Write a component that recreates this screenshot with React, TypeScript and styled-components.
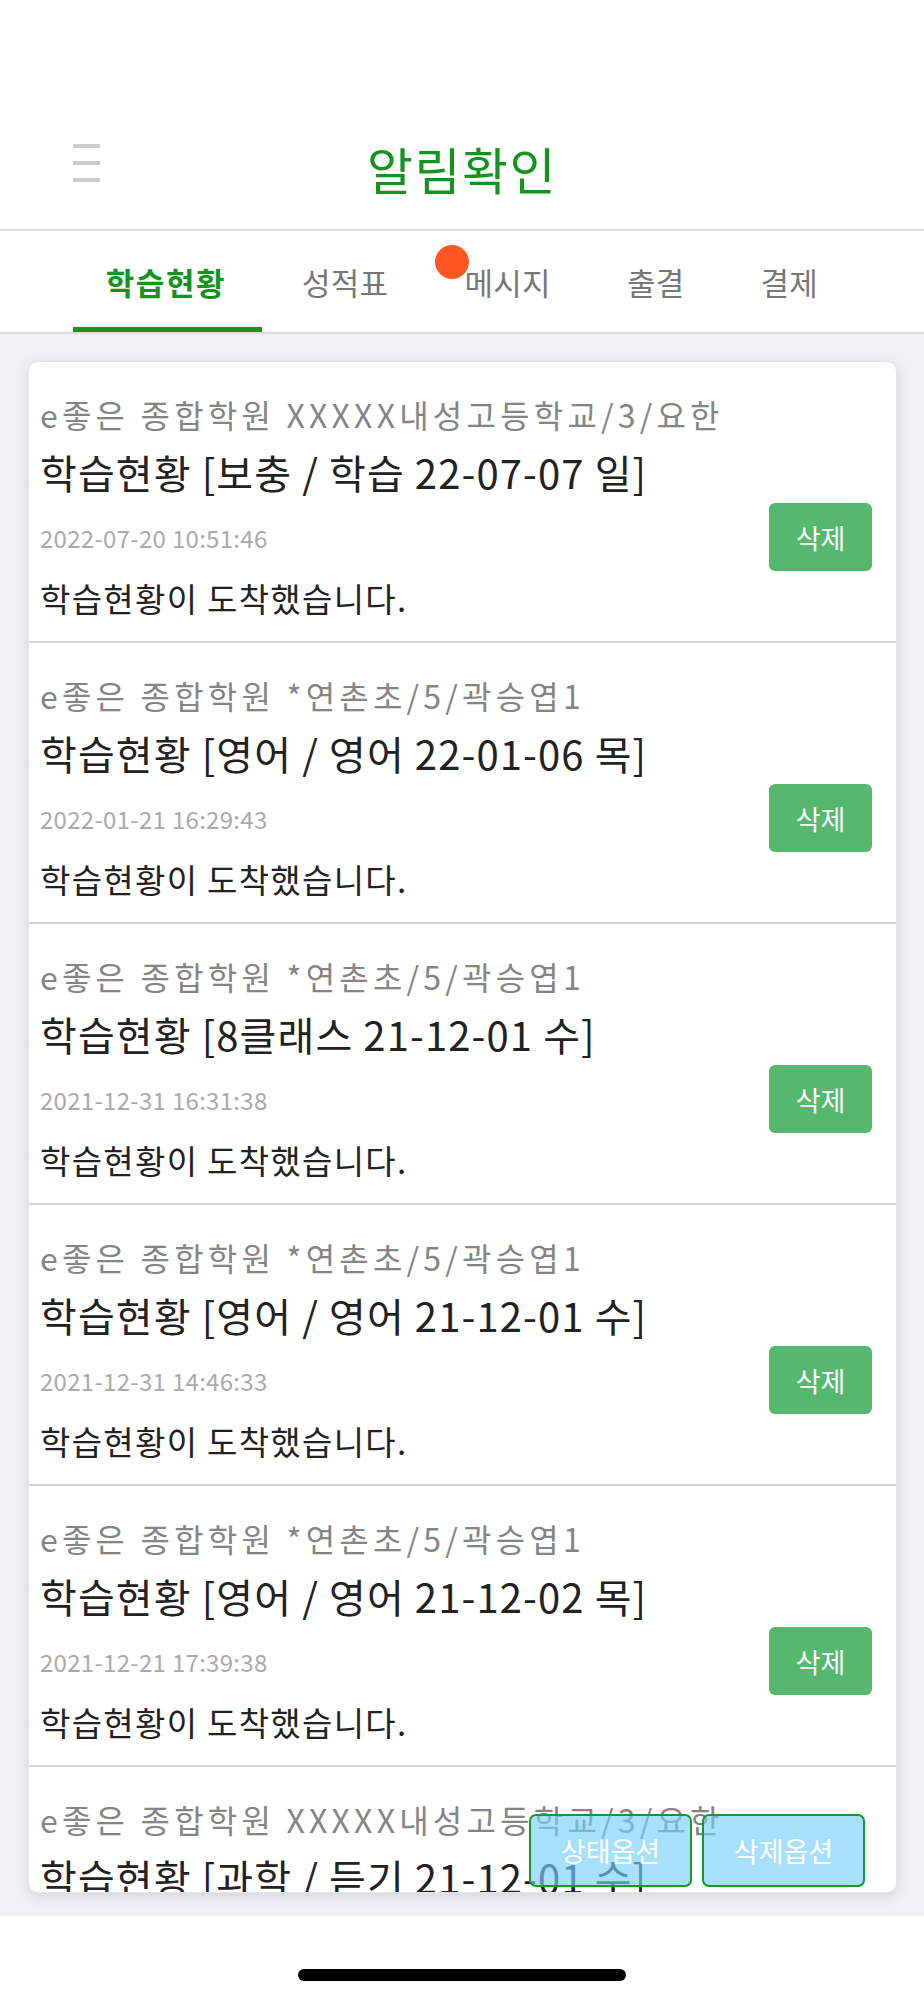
import React from 'react';
import styled, { createGlobalStyle } from 'styled-components';

// 알림확인 화면 — 헤더, 탭, 알림 카드 목록

const GlobalStyle = createGlobalStyle`
  body {
    margin: 0;
    background: #ffffff;
    font-family: "Noto Sans CJK KR", "Noto Sans", sans-serif;
  }
  * {
    box-sizing: border-box;
  }
`;

const Page = styled.div`
  width: 924px;
  height: 2000px;
  display: flex;
  flex-direction: column;
  background: #ffffff;
`;

const StatusSpace = styled.div`
  height: 100px;
  flex: none;
`;

const Header = styled.header`
  height: 131px;
  flex: none;
  display: grid;
  grid-template-columns: 1fr auto 1fr;
  align-items: center;
  border-bottom: 2px solid #dcdcdc;
`;

const MenuButton = styled.div`
  display: flex;
  flex-direction: column;
  gap: 13px;
  width: 27px;
  margin-left: 73px;
  margin-top: -4px;

  span {
    display: block;
    height: 4px;
    background: #cccccc;
  }
`;

const Title = styled.h1`
  margin: 6px 0 0;
  font-size: 50px;
  font-weight: 400;
  letter-spacing: 1.5px;
  color: #14941f;
  line-height: 1;
`;

const TabBar = styled.nav`
  height: 103px;
  flex: none;
  display: flex;
  justify-content: center;
  border-bottom: 2px solid #dcdcdc;
`;

const Tab = styled.div<{ $active?: boolean }>`
  position: relative;
  display: flex;
  align-items: center;
  padding: 0 38px;
  font-size: 31px;
  letter-spacing: ${(p) => (p.$active ? '1.5px' : '0.3px')};
  font-weight: ${(p) => (p.$active ? 600 : 400)};
  color: ${(p) => (p.$active ? '#14941f' : '#777777')};

  &::after {
    content: '';
    position: absolute;
    left: 5px;
    right: 2px;
    bottom: 0;
    height: 5px;
    background: ${(p) => (p.$active ? '#14941f' : 'transparent')};
  }
`;

const Badge = styled.span`
  position: absolute;
  left: 9px;
  top: 14px;
  width: 34px;
  height: 34px;
  border-radius: 50%;
  background: #ff5722;
`;

const Content = styled.main`
  position: relative;
  flex: none;
  height: 1582px;
  padding: 27px 27px 0 28px;
  background: #eff0f2;
`;

const Card = styled.section`
  height: 1532px;
  overflow: hidden;
  background: #ffffff;
  border-radius: 10px;
  border: 1px solid #e1e5ee;
  box-shadow: 0 3px 14px rgba(0, 0, 0, 0.12);
`;

const Item = styled.article`
  padding: 32px 24px 22px 11px;
  border-bottom: 2px solid #d6d6d6;
`;

const School = styled.div`
  font-size: 32px;
  line-height: 40px;
  letter-spacing: 4.2px;
  font-weight: 400;
  color: #858585;
  white-space: nowrap;
`;

const ItemTitle = styled.div`
  margin-top: 14px;
  font-size: 40px;
  line-height: 48px;
  letter-spacing: 1.1px;
  color: #222222;
  white-space: nowrap;
`;

const DateRow = styled.div`
  margin-top: 7px;
  height: 68px;
  display: flex;
  align-items: center;
  justify-content: space-between;
`;

const DateText = styled.span`
  font-size: 24px;
  letter-spacing: 0.3px;
  color: #aaaaaa;
`;

const DeleteButton = styled.button`
  width: 103px;
  height: 68px;
  border: none;
  border-radius: 6px;
  background: #55b86e;
  color: #ffffff;
  font-family: inherit;
  font-size: 27px;
  padding: 0;
`;

const Message = styled.div`
  margin-top: 6px;
  font-size: 33px;
  line-height: 42px;
  letter-spacing: 1.3px;
  color: #222222;
`;

const FloatingActions = styled.div`
  position: absolute;
  right: 59px;
  bottom: 29px;
  display: flex;
  gap: 10px;
`;

const OptionButton = styled.button`
  width: 163px;
  height: 73px;
  padding: 0;
  border: 2px solid #16992a;
  border-radius: 7px;
  background: rgba(118, 207, 249, 0.65);
  color: #ffffff;
  font-family: inherit;
  font-size: 27px;
`;

const HomeArea = styled.div`
  flex: none;
  height: 84px;
  display: flex;
  justify-content: center;
  padding-top: 53px;
  background: #ffffff;
`;

const HomeIndicator = styled.div`
  width: 328px;
  height: 12px;
  border-radius: 6px;
  background: #000000;
`;

const tabs = ['학습현황', '성적표', '메시지', '출결', '결제'];

const notices = [
  { school: 'e좋은 종합학원 XXXXX내성고등학교/3/요한', title: '학습현황 [보충 / 학습 22-07-07 일]', date: '2022-07-20 10:51:46' },
  { school: 'e좋은 종합학원 *연촌초/5/곽승엽1', title: '학습현황 [영어 / 영어 22-01-06 목]', date: '2022-01-21 16:29:43' },
  { school: 'e좋은 종합학원 *연촌초/5/곽승엽1', title: '학습현황 [8클래스 21-12-01 수]', date: '2021-12-31 16:31:38' },
  { school: 'e좋은 종합학원 *연촌초/5/곽승엽1', title: '학습현황 [영어 / 영어 21-12-01 수]', date: '2021-12-31 14:46:33' },
  { school: 'e좋은 종합학원 *연촌초/5/곽승엽1', title: '학습현황 [영어 / 영어 21-12-02 목]', date: '2021-12-21 17:39:38' },
  { school: 'e좋은 종합학원 XXXXX내성고등학교/3/요한', title: '학습현황 [과학 / 듣기 21-12-01 수]', date: '2021-12-20 15:12:07' },
];

export default function App() {
  return (
    <>
      <GlobalStyle />
      <Page>
        <StatusSpace />
        <Header>
          <MenuButton>
            <span />
            <span />
            <span />
          </MenuButton>
          <Title>알림확인</Title>
          <div />
        </Header>

        <TabBar>
          {tabs.map((t, i) => (
            <Tab key={t} $active={i === 0}>
              {i === 2 && <Badge />}
              {t}
            </Tab>
          ))}
        </TabBar>

        <Content>
          <Card>
            {notices.map((n, i) => (
              <Item key={i}>
                <School>{n.school}</School>
                <ItemTitle>{n.title}</ItemTitle>
                <DateRow>
                  <DateText>{n.date}</DateText>
                  <DeleteButton>삭제</DeleteButton>
                </DateRow>
                <Message>학습현황이 도착했습니다.</Message>
              </Item>
            ))}
          </Card>

          {/* 목록 위에 떠 있는 옵션 버튼 */}
          <FloatingActions>
            <OptionButton>상태옵션</OptionButton>
            <OptionButton>삭제옵션</OptionButton>
          </FloatingActions>
        </Content>

        <HomeArea>
          <HomeIndicator />
        </HomeArea>
      </Page>
    </>
  );
}
